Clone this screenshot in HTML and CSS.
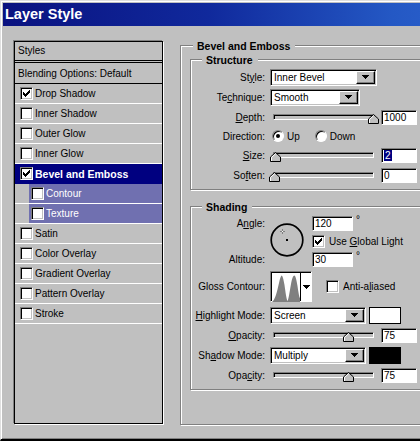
FILE: index.html
```html
<!DOCTYPE html>
<html lang="en">
<head>
    <meta charset="UTF-8">
    <title>Layer Style</title>
    <link rel="stylesheet" href="styles.css">
</head>
<body>
<div class="window">
    <div class="titlebar">Layer Style</div>
    <div class="dialog">
        <!-- left: list of effects -->
        <div class="styles-list">
            <div class="list-head">Styles</div>
            <div class="list-item blending">Blending Options: Default</div>
            <div class="list-item"><span class="check"><svg class="tick" width="7" height="7" viewBox="0 0 7 7"><path d="M0 2h1v3H0zM1 3h1v3H1zM2 4h1v3H2zM3 3h1v3H3zM4 2h1v3H4zM5 1h1v3H5zM6 0h1v3H6z"/></svg></span>Drop Shadow</div>
            <div class="list-item"><span class="check"></span>Inner Shadow</div>
            <div class="list-item"><span class="check"></span>Outer Glow</div>
            <div class="list-item"><span class="check"></span>Inner Glow</div>
            <div class="list-item selected"><span class="check"><svg class="tick" width="7" height="7" viewBox="0 0 7 7"><path d="M0 2h1v3H0zM1 3h1v3H1zM2 4h1v3H2zM3 3h1v3H3zM4 2h1v3H4zM5 1h1v3H5zM6 0h1v3H6z"/></svg></span>Bevel and Emboss</div>
            <div class="list-item sub"><span class="check"></span>Contour</div>
            <div class="list-item sub"><span class="check"></span>Texture</div>
            <div class="list-item"><span class="check"></span>Satin</div>
            <div class="list-item"><span class="check"></span>Color Overlay</div>
            <div class="list-item"><span class="check"></span>Gradient Overlay</div>
            <div class="list-item"><span class="check"></span>Pattern Overlay</div>
            <div class="list-item"><span class="check"></span>Stroke</div>
        </div>

        <!-- right: bevel and emboss settings -->
        <div class="group main-group">
            <div class="group-title">Bevel and Emboss</div>

            <div class="group sub-group">
                <div class="group-title">Structure</div>
                <div class="row">
                    <span class="label">St<u>y</u>le:</span>
                    <div class="select style-select"><span class="select-text">Inner Bevel</span><span class="drop-btn"><svg width="7" height="4" viewBox="0 0 7 4"><path d="M0 0h7v1H0zM1 1h5v1H1zM2 2h3v1H2zM3 3h1v1H3z"/></svg></span></div>
                </div>
                <div class="row">
                    <span class="label">Te<u>c</u>hnique:</span>
                    <div class="select technique-select"><span class="select-text">Smooth</span><span class="drop-btn"><svg width="7" height="4" viewBox="0 0 7 4"><path d="M0 0h7v1H0zM1 1h5v1H1zM2 2h3v1H2zM3 3h1v1H3z"/></svg></span></div>
                </div>
                <div class="row">
                    <span class="label"><u>D</u>epth:</span>
                    <div class="slider"><svg class="thumb" style="left: calc(100% - 5px)" width="11" height="10" viewBox="0 0 11 10"><path d="M5.5 .5L10.5 5v4.5H.5V5z" fill="#c0c0c0" stroke="#000"/><path d="M1.5 9V5.4l4-3.6" fill="none" stroke="#fff"/></svg></div>
                    <span class="number">1000</span>
                </div>
                <div class="row direction-row">
                    <span class="label">Direction:</span>
                    <span class="radio on"></span><span class="radio-text">Up</span>
                    <span class="radio down"></span><span class="radio-text">Down</span>
                </div>
                <div class="row">
                    <span class="label"><u>S</u>ize:</span>
                    <div class="slider"><svg class="thumb" style="left: calc(1% - 5px)" width="11" height="10" viewBox="0 0 11 10"><path d="M5.5 .5L10.5 5v4.5H.5V5z" fill="#c0c0c0" stroke="#000"/><path d="M1.5 9V5.4l4-3.6" fill="none" stroke="#fff"/></svg></div>
                    <span class="number"><span class="sel">2</span></span>
                    <span class="unit">px</span>
                </div>
                <div class="row">
                    <span class="label">So<u>f</u>ten:</span>
                    <div class="slider"><svg class="thumb" style="left: calc(0% - 5px)" width="11" height="10" viewBox="0 0 11 10"><path d="M5.5 .5L10.5 5v4.5H.5V5z" fill="#c0c0c0" stroke="#000"/><path d="M1.5 9V5.4l4-3.6" fill="none" stroke="#fff"/></svg></div>
                    <span class="number">0</span>
                    <span class="unit">px</span>
                </div>
            </div>

            <div class="group sub-group shading">
                <div class="group-title">Shading</div>
                <div class="angle-block">
                    <span class="cell label-cell">A<u>n</u>gle:</span>
                    <svg class="dial" width="34" height="34" viewBox="0 0 34 34">
                        <circle cx="17" cy="17" r="15.8" fill="none" stroke="#000" stroke-width="1.7"/>
                        <rect x="16" y="16" width="2" height="2"/>
                        <path d="M10 8h5v1h-5zM12 6h1v5h-1z" fill="#808080"/>
                        <rect x="12" y="8" width="1" height="1" fill="#fff"/>
                    </svg>
                    <span class="cell angle-cell"><span class="number wide">120</span><span class="deg">°</span></span>
                    <span class="cell global-cell"><span class="check"><svg class="tick" width="7" height="7" viewBox="0 0 7 7"><path d="M0 2h1v3H0zM1 3h1v3H1zM2 4h1v3H2zM3 3h1v3H3zM4 2h1v3H4zM5 1h1v3H5zM6 0h1v3H6z"/></svg></span><span class="check-text">Use <u>G</u>lobal Light</span></span>
                    <span class="cell label-cell altitude-label">Altitude:</span>
                    <span class="cell altitude-cell"><span class="number wide">30</span><span class="deg">°</span></span>
                </div>
                <div class="row gloss-row">
                    <span class="label">Gloss Contour:</span>
                    <div class="contour">
                        <svg class="curve" width="28" height="29" viewBox="0 0 28 29"><path d="M0 29C3 27 5 19 7 10C8 5 9 2.5 9.7 2.5C10.5 2.5 11.5 6 12.5 12C13.5 19 14.5 27 15.5 28C16.5 27 17.5 19 19 11C20 6 21 2.5 22.3 2.5C23.5 2.5 24.5 7 25.5 13C26.5 20 27.2 24 28 25V29z" fill="#808080"/></svg>
                        <span class="contour-btn"><svg width="7" height="4" viewBox="0 0 7 4"><path d="M0 0h7v1H0zM1 1h5v1H1zM2 2h3v1H2zM3 3h1v1H3z"/></svg></span>
                    </div>
                    <span class="check anti"></span><span class="check-text">Anti-a<u>l</u>iased</span>
                </div>
                <div class="row">
                    <span class="label"><u>H</u>ighlight Mode:</span>
                    <div class="select mode-select"><span class="select-text">Screen</span><span class="drop-btn"><svg width="7" height="4" viewBox="0 0 7 4"><path d="M0 0h7v1H0zM1 1h5v1H1zM2 2h3v1H2zM3 3h1v1H3z"/></svg></span></div>
                    <span class="swatch white"></span>
                </div>
                <div class="row">
                    <span class="label"><u>O</u>pacity:</span>
                    <div class="slider"><svg class="thumb" style="left: calc(75% - 5px)" width="11" height="10" viewBox="0 0 11 10"><path d="M5.5 .5L10.5 5v4.5H.5V5z" fill="#c0c0c0" stroke="#000"/><path d="M1.5 9V5.4l4-3.6" fill="none" stroke="#fff"/></svg></div>
                    <span class="number">75</span>
                </div>
                <div class="row">
                    <span class="label">Sh<u>a</u>dow Mode:</span>
                    <div class="select mode-select"><span class="select-text">Multiply</span><span class="drop-btn"><svg width="7" height="4" viewBox="0 0 7 4"><path d="M0 0h7v1H0zM1 1h5v1H1zM2 2h3v1H2zM3 3h1v1H3z"/></svg></span></div>
                    <span class="swatch black"></span>
                </div>
                <div class="row">
                    <span class="label">Opa<u>c</u>ity:</span>
                    <div class="slider"><svg class="thumb" style="left: calc(75% - 5px)" width="11" height="10" viewBox="0 0 11 10"><path d="M5.5 .5L10.5 5v4.5H.5V5z" fill="#c0c0c0" stroke="#000"/><path d="M1.5 9V5.4l4-3.6" fill="none" stroke="#fff"/></svg></div>
                    <span class="number">75</span>
                </div>
            </div>
        </div>
    </div>
</div>
</body>
</html>
```

FILE: styles.css
```css
html, body {
    margin: 0;
    width: 420px;
    height: 441px;
    overflow: hidden;
    background: #c0c0c0;
}

body {
    font-family: "Liberation Sans", Arial, sans-serif;
    font-size: 10px;
    color: #000;
}

u {
    text-underline-offset: 1px;
}

.window {
    box-sizing: border-box;
    width: 460px;
    height: 441px;
    padding: 2px 0 0 2px;
    border-top: 1px solid #dfdfdf;
    border-left: 1px solid #dfdfdf;
    border-bottom: 2px solid #000;
    box-shadow: inset 1px 1px #fff, inset 0 -1px #808080;
    background: #c0c0c0;
}

.titlebar {
    height: 23px;
    padding-left: 2px;
    background: linear-gradient(to right, #0a1280, #10299c 45%, #2458c4 85%, #2a60cc);
    color: #fff;
    font-size: 14.5px;
    font-weight: bold;
    line-height: 23px;
}

.dialog {
    display: flex;
    align-items: flex-start;
    padding-top: 15px;
}

/* styles list */

.styles-list {
    box-sizing: border-box;
    width: 149px;
    height: 383px;
    margin-left: 11px;
    border: 1px solid #000;
    box-shadow: -1px -1px 0 #808080, 1px 1px 0 #fff;
}

.list-head {
    height: 18px;
    padding-left: 3px;
    line-height: 18px;
    border-bottom: 3px double #000;
}

.list-item {
    display: flex;
    align-items: center;
    gap: 2px;
    height: 19px;
    padding-left: 5px;
    border-bottom: 1px solid #fff;
}

.list-item.blending {
    height: 20px;
    padding-left: 3px;
    border-bottom-color: #000;
}

.list-item.selected {
    background: #000080;
    color: #fff;
    font-weight: bold;
    font-size: 10.5px;
    border-bottom-color: #000080;
}

.list-item.sub {
    padding-left: 16px;
    background: linear-gradient(to right, transparent 14px, #7070b0 14px);
    color: #fff;
}

/* checkbox and radio */

.check {
    box-sizing: border-box;
    flex: none;
    display: flex;
    align-items: center;
    justify-content: center;
    width: 13px;
    height: 13px;
    border: 1px solid;
    border-color: #808080 #fff #fff #808080;
    box-shadow: inset 1px 1px #000, inset -1px -1px #c0c0c0;
    background: #fff;
    color: #000;
}

.tick {
    display: block;
    fill: #000;
}

.check-text {
    margin-left: 4px;
}

.radio {
    box-sizing: border-box;
    position: relative;
    flex: none;
    width: 12px;
    height: 12px;
    margin-left: 2px;
    border-radius: 50%;
    border: 1px solid;
    border-color: #808080 #fff #fff #808080;
    box-shadow: inset 1px 1px #000;
    background: #fff;
}

.radio.on::after {
    content: "";
    position: absolute;
    left: 3px;
    top: 3px;
    width: 4px;
    height: 4px;
    border-radius: 50%;
    background: #000;
}

.radio.down {
    margin-left: 15px;
}

.radio-text {
    margin-left: 3px;
}

/* group boxes */

.group {
    position: relative;
    box-sizing: border-box;
    border: 1px solid #808080;
    box-shadow: inset 1px 1px #fff, 1px 1px #fff;
}

.group-title {
    position: absolute;
    top: -6px;
    left: 11px;
    padding: 0 5px 0 4px;
    background: #c0c0c0;
    font-size: 10.5px;
    font-weight: bold;
    line-height: 12px;
}

.main-group {
    width: 260px;
    height: 380px;
    margin: 4px 0 0 17px;
    padding: 13px 0 0 9px;
}

.main-group > .group-title {
    left: 12px;
}

.sub-group {
    width: 250px;
    padding: 7px 0 4px 0;
}

.shading {
    margin-top: 16px;
}

/* form rows */

.row {
    display: flex;
    align-items: center;
    height: 20px;
}

.direction-row {
    height: 18px;
}

.gloss-row {
    height: 37px;
}

.label {
    flex: none;
    width: 74px;
    margin-right: 5px;
    text-align: right;
    white-space: nowrap;
}

.select {
    box-sizing: border-box;
    display: flex;
    align-items: center;
    height: 17px;
    padding: 1px 1px 1px 3px;
    border: 1px solid;
    border-color: #808080 #fff #fff #808080;
    box-shadow: inset 1px 1px #000, inset -1px -1px #c0c0c0;
    background: #fff;
}

.style-select {
    width: 107px;
}

.technique-select {
    width: 90px;
}

.mode-select {
    width: 96px;
}

.select-text {
    flex: 1;
    white-space: nowrap;
}

.drop-btn {
    box-sizing: border-box;
    display: flex;
    align-items: center;
    justify-content: center;
    width: 19px;
    height: 13px;
    border: 1px solid;
    border-color: #fff #000 #000 #fff;
    box-shadow: inset -1px -1px #808080;
    background: #c0c0c0;
}

.drop-btn svg,
.contour-btn svg {
    display: block;
    fill: #000;
}

.slider {
    box-sizing: border-box;
    position: relative;
    width: 101px;
    height: 6px;
    margin-left: 3px;
    border: 1px solid;
    border-color: #808080 #fff #fff #808080;
    box-shadow: inset 1px 1px #000;
    background: #c0c0c0;
}

.thumb {
    position: absolute;
    top: -1px;
    display: block;
}

.number {
    box-sizing: border-box;
    width: 36px;
    height: 15px;
    margin-left: 7px;
    padding-left: 2px;
    border: 1px solid;
    border-color: #808080 #fff #fff #808080;
    box-shadow: inset 1px 1px #000;
    background: #fff;
    line-height: 13px;
}

.number.wide {
    width: 41px;
    margin-left: 0;
}

.sel {
    background: #000080;
    color: #fff;
    padding: 0 1px;
}

.unit {
    margin-left: 3px;
}

/* shading: angle dial block */

.angle-block {
    display: grid;
    grid-template-columns: 74px 37px auto;
    grid-template-rows: 19px 17px 18px;
    column-gap: 5px;
}

.cell {
    display: flex;
    align-items: center;
}

.label-cell {
    justify-content: flex-end;
    white-space: nowrap;
}

.dial {
    grid-column: 2;
    grid-row: 1 / 4;
    margin-top: 9px;
    display: block;
}

.angle-cell,
.global-cell,
.altitude-cell {
    grid-column: 3;
}

.altitude-label {
    grid-column: 1;
    grid-row: 3;
}

.altitude-cell {
    grid-row: 3;
}

.deg {
    align-self: flex-start;
    margin-left: 3px;
    line-height: 12px;
}

.contour {
    box-sizing: border-box;
    display: flex;
    width: 42px;
    height: 31px;
    padding: 1px 0 0 1px;
    border: 1px solid;
    border-color: #808080 #fff #fff #808080;
    box-shadow: inset 1px 1px #000;
    background: #fff;
}

.curve {
    display: block;
}

.contour-btn {
    display: flex;
    align-items: center;
    justify-content: center;
    width: 10px;
    border-left: 1px solid #000;
}

.check.anti {
    margin-left: 14px;
}

.swatch {
    box-sizing: border-box;
    width: 32px;
    height: 17px;
    margin-left: 3px;
    border: 1px solid #000;
}

.swatch.white {
    background: #fff;
}

.swatch.black {
    background: #000;
}
```
